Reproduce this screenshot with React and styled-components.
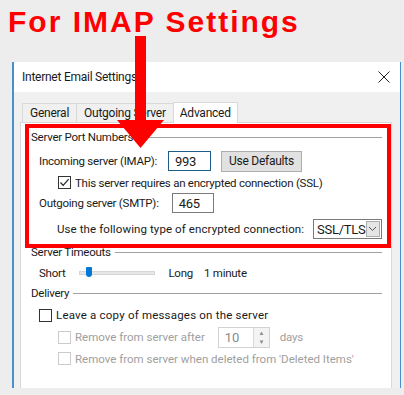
import React from "react";
import styled, { createGlobalStyle } from "styled-components";

const Global = createGlobalStyle`
	html, body { margin: 0; padding: 0; background: #ededed; }
	* { box-sizing: border-box; }
`;

const Page = styled.div`
	position: relative;
	width: 404px;
	height: 395px;
	overflow: hidden;
	background: #ededed;
	font-family: Roboto, "Noto Sans", sans-serif;
	font-size: 11.5px;
	letter-spacing: -0.25px;
	color: #1a1a1a;
`;

const Heading = styled.h1`
	margin: 0;
	height: 62px;
	padding: 5px 0 0 8px;
	font-family: "Liberation Sans", sans-serif;
	font-weight: 700;
	font-size: 30px;
	line-height: 34px;
	letter-spacing: 2px;
	color: #ff0000;
`;

const Dialog = styled.div`
	margin-left: 12px;
	width: 389px;
	height: 326px;
	border-left: 2px solid #4a8fd0;
	border-right: 1px solid #4a8fd0;
	background: #f0f0f0;
	display: flex;
	flex-direction: column;
`;

const TitleBar = styled.div`
	height: 30px;
	background: #fff;
	display: flex;
	align-items: center;
	justify-content: space-between;
	padding: 0 10px 0 8px;
	font-size: 12px;
`;

const Body = styled.div`
	flex: 1;
	padding: 9px 8px 0 6px;
	display: flex;
	flex-direction: column;
`;

const Tabs = styled.div`
	display: flex;
	align-items: flex-end;
	padding-left: 3px;
	height: 21px;
`;

const Tab = styled.div`
	height: ${({ $active }) => ($active ? "21px" : "19px")};
	padding: 0 ${({ $active }) => ($active ? "6px" : "7px")};
	display: flex;
	align-items: center;
	font-size: 12px;
	background: ${({ $active }) => ($active ? "#fff" : "#f0f0f0")};
	border: 1px solid #d9d9d9;
	border-bottom: none;
	margin-left: -1px;
	position: relative;
	z-index: ${({ $active }) => ($active ? 1 : 0)};
	margin-bottom: ${({ $active }) => ($active ? "-1px" : "0")};
`;

const Panel = styled.div`
	flex: 1;
	background: #fff;
	border: 1px solid #d9d9d9;
	border-bottom: none;
	padding: 6px 9px 0 10px;
`;

const Legend = styled.div`
	display: flex;
	align-items: center;
	gap: 4px;
	height: 16px;
	margin-bottom: ${({ $after }) => $after || 0}px;
	&::after {
		content: "";
		flex: 1;
		height: 1px;
		background: #a0a0a0;
	}
`;

const Row = styled.div`
	display: flex;
	align-items: center;
	height: ${({ $h }) => $h || 22}px;
	padding-left: ${({ $indent }) => $indent || 0}px;
	color: ${({ $disabled }) => ($disabled ? "#a0a0a0" : "inherit")};
`;

const Label = styled.span`
	white-space: nowrap;
	margin-right: ${({ $gap }) => $gap || 0}px;
	letter-spacing: ${({ $ls }) => ($ls === undefined ? "inherit" : `${$ls}px`)};
`;

const Field = styled.div`
	width: ${({ $w }) => $w}px;
	height: 20px;
	border: 1px solid ${({ $focus }) => ($focus ? "#1d5f8c" : "#7a7a7a")};
	display: flex;
	align-items: center;
	padding-left: 6px;
	font-size: 13px;
	background: #fff;
`;

const Button = styled.div`
	height: 21px;
	margin-left: 10px;
	padding: 0 7px;
	display: flex;
	align-items: center;
	font-size: 12px;
	background: #e1e1e1;
	border: 1px solid #adadad;
`;

const Box = styled.span`
	width: 13px;
	height: 13px;
	border: 1px solid ${({ $disabled }) => ($disabled ? "#cccccc" : "#333")};
	display: inline-flex;
	align-items: center;
	justify-content: center;
	margin-right: 4px;
	background: #fff;
`;

const Select = styled.div`
	margin-left: auto;
	width: 69px;
	height: 20px;
	border: 1px solid #7a7a7a;
	display: flex;
	align-items: center;
	justify-content: space-between;
	padding: 1px 1px 1px 3px;
	font-size: 13px;
`;

const DropButton = styled.span`
	width: 16px;
	height: 100%;
	background: #e5e5e5;
	border: 1px solid #adadad;
	display: flex;
	align-items: center;
	justify-content: center;
`;

const Track = styled.div`
	position: relative;
	width: 76px;
	height: 4px;
	margin: 0 13px 0 14px;
	background: #e7e7e7;
	border: 1px solid #d6d6d6;
`;

const Thumb = styled.span`
	position: absolute;
	left: 6px;
	top: -5px;
	width: 6px;
	height: 10px;
	background: #0078d7;
	border-radius: 1px 1px 3px 3px;
`;

const Spin = styled.div`
	width: 52px;
	height: 21px;
	margin: 0 10px 0 13px;
	border: 1px solid #d2d2d2;
	display: flex;
	align-items: center;
	justify-content: space-between;
	padding-left: 6px;
	font-size: 13px;
	color: #8a8a8a;
`;

const SpinButtons = styled.div`
	width: 16px;
	height: 100%;
	border-left: 1px solid #d9d9d9;
	display: flex;
	flex-direction: column;
	align-items: center;
	justify-content: space-around;
	font-size: 6px;
	color: #888;
	background: #f3f3f3;
`;

const RedBox = styled.div`
	position: absolute;
	left: 25px;
	top: 124px;
	width: 366px;
	height: 124px;
	border: 4px solid #ff0000;
	pointer-events: none;
`;

const Arrow = styled.svg`
	position: absolute;
	left: 116px;
	top: 36px;
`;

const Check = () => (
	<svg width="11" height="11" viewBox="0 0 11 11">
		<path d="M1.5 5.5 L4.2 8.3 L9.6 2.2" fill="none" stroke="#222" strokeWidth="1.2" />
	</svg>
);

export default function App() {
	return (
		<Page>
			<Global />
			<Heading>For IMAP Settings</Heading>
			<Dialog>
				<TitleBar>
					<span>Internet Email Settings</span>
					<svg width="12" height="12" viewBox="0 0 12 12">
						<path d="M0.5 0.5 L11.5 11.5 M11.5 0.5 L0.5 11.5" stroke="#222" strokeWidth="1" />
					</svg>
				</TitleBar>
				<Body>
					<Tabs>
						<Tab>General</Tab>
						<Tab>Outgoing Server</Tab>
						<Tab $active>Advanced</Tab>
					</Tabs>
					<Panel>
						<Legend $after={4}>Server Port Numbers</Legend>
						<Row $h={24} $indent={8}>
							<Label $gap={11}>Incoming server (IMAP):</Label>
							<Field $w={43} $focus>993</Field>
							<Button>Use Defaults</Button>
						</Row>
						<Row $h={19} $indent={27}>
							<Box><Check /></Box>
							<Label>This server requires an encrypted connection (SSL)</Label>
						</Row>
						<Row $h={22} $indent={8}>
							<Label $gap={13}>Outgoing server (SMTP):</Label>
							<Field $w={42}>465</Field>
						</Row>
						<Row $h={30} $indent={26}>
							<Label $ls={0.1}>Use the following type of encrypted connection:</Label>
							<Select>
								SSL/TLS
								<DropButton>
									<svg width="9" height="6" viewBox="0 0 9 6">
										<path d="M1 1 L4.5 4.5 L8 1" fill="none" stroke="#555" strokeWidth="1" />
									</svg>
								</DropButton>
							</Select>
						</Row>
						<Legend>Server Timeouts</Legend>
						<Row $h={25} $indent={8}>
							<Label>Short</Label>
							<Track><Thumb /></Track>
							<Label $gap={11}>Long</Label>
							<Label>1 minute</Label>
						</Row>
						<Legend $after={3}>Delivery</Legend>
						<Row $h={22} $indent={8}>
							<Box />
							<Label $ls={0.2}>Leave a copy of messages on the server</Label>
						</Row>
						<Row $h={22} $indent={27} $disabled>
							<Box $disabled />
							<Label $ls={0}>Remove from server after</Label>
							<Spin>
								10
								<SpinButtons><span>▲</span><span>▼</span></SpinButtons>
							</Spin>
							<Label>days</Label>
						</Row>
						<Row $h={21} $indent={27} $disabled>
							<Box $disabled />
							<Label $ls={0}>Remove from server when deleted from 'Deleted Items'</Label>
						</Row>
					</Panel>
				</Body>
			</Dialog>
			<RedBox />
			<Arrow width="50" height="114" viewBox="0 0 50 114">
				<rect x="19" y="0" width="11" height="86" fill="#ff0000" />
				<polygon points="1,84 48,84 24.5,112" fill="#ff0000" />
			</Arrow>
		</Page>
	);
}
